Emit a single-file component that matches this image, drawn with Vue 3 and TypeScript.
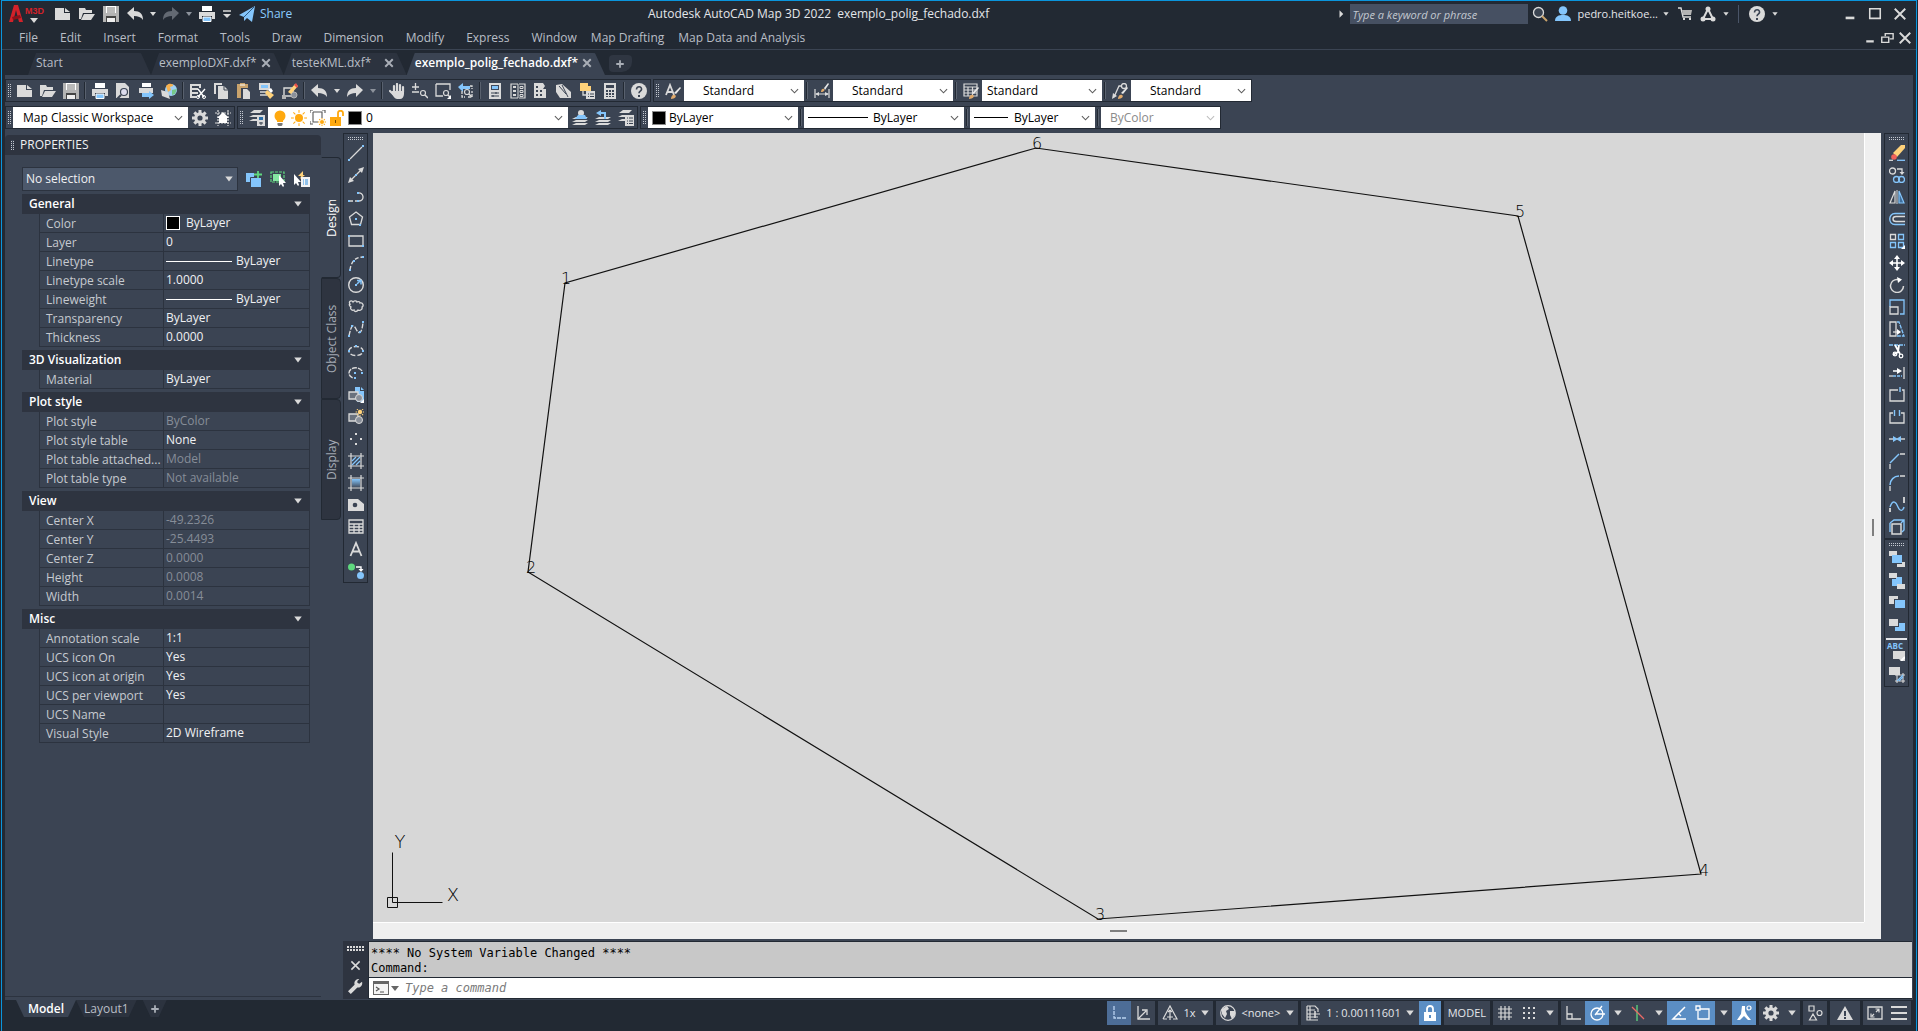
<script setup lang="ts">
import { h, ref } from 'vue'

const W = '#dadada'
const B = '#84c5fb'
const D = '#3b4453'
const Y = '#ffd27a'
const G = '#b4b4b4'

const ln = (d: string, c: string = W, w = 1.3, extra = '') =>
  `<path d="${d}" fill="none" stroke="${c}" stroke-width="${w}" ${extra}/>`
const fl = (d: string, c: string = W) => `<path d="${d}" fill="${c}"/>`
const dots = (pts: number[][], c: string = B) =>
  pts.map(([x, y]) => `<rect x="${x - 1}" y="${y - 1}" width="2" height="2" fill="${c}"/>`).join('')

const printer = fl('M3 0h10v5H3z', '#fff') + fl('M0 6h16v7h-3v-3H3v3H0z') + fl('M4 11h8v4H4z', B) + ln('M4 11h8v4.500H4z', '#fff', 1)
const undoArrow = 'M0 7l7-6v4c6 0 9 3 9 9-2-3-5-4-9-4v4z'
const redoArrow = 'M16 7L9 1v4c-6 0-9 3-9 9 2-3 5-4 9-4v4z'
const brush = fl('M9 10l6-6 1 1-5 6z', '#e8e8e8') + fl('M6 16c0-3 2-5 4-4s0 4-4 4z', '#e0a96a')
const block = `<path d="M1 5h9v7H1z" fill="#6a727e" stroke="${W}" stroke-width="1.300"/><circle cx="11" cy="11" r="3.500" fill="#8a909a" stroke="${W}"/>`
const magnifier = (x: number, y: number) =>
  `<circle cx="${x}" cy="${y}" r="2.500" fill="none" stroke="${W}" stroke-width="1.200"/>` + ln(`M${x + 2} ${y + 2}l3 3`, W, 1.5)
const layers = fl('M4 7h12l-3 2H0z') + fl('M4 10h12l-3 2H0z') + fl('M4 13h12l-3 2H0z')
const hatchFrame = ln('M3 0v16M13 0v16M0 3h16M0 13h16', W, 1.2)
const gear = (() => {
  let teeth = ''
  for (let i = 0; i < 8; i++) teeth += `<rect x="6.500" y="0" width="3" height="4" fill="${W}" transform="rotate(${i * 45} 8 8)"/>`
  return teeth + `<circle cx="8" cy="8" r="4.200" fill="none" stroke="${W}" stroke-width="3.200"/>`
})()
const sun = (cx: number, cy: number, r: number, c: string) => {
  let s = `<circle cx="${cx}" cy="${cy}" r="${r}" fill="${c}"/>`
  for (let i = 0; i < 8; i++)
    s += `<rect x="${cx - 0.5}" y="${cy - r * 2}" width="1" height="${r * 0.7}" fill="${c}" transform="rotate(${i * 45} ${cx} ${cy})"/>`
  return s
}

const icons: Record<string, string> = {
  new: fl('M0 2h9v5h6v7H0z') + fl('M10 2l5 4h-5z'),
  open: fl('M0 2h6l1 2h6v3H4L2 13H0z') + fl('M5 8h11l-4 6H2z'),
  save: fl('M0 0h16v16H0z', G) + fl('M3 0h10v7H3z', '#fff') + ln('M4 2h8M4 4h8M4 6h8', '#777', 1) + fl('M3 10h10v6H3z', '#444') + fl('M4 12h8v4H4z', '#eee'),
  print: printer,
  undo: fl(undoArrow), undoDim: fl(undoArrow, '#5a606b'),
  redo: fl(redoArrow), redoDim: fl(redoArrow, '#636973'),
  caret: fl('M5 6h6l-3 4z'), caretDim: fl('M5 6h6l-3 4z', '#8d939c'),
  qatMenu: ln('M4 5h8', W, 1.5) + fl('M4 8h8l-4 4z'),
  share: fl('M0 9L16 0 13 16 8 12 5 15V11z', B) + ln('M5 11L15 1', '#2d5a82', 1),
  preview: fl('M1 0h9l4 4v11H1z') + `<circle cx="9" cy="9" r="3.500" fill="#dde" stroke="${D}" stroke-width="1.200"/>` + ln('M6 12l-4 4', D, 2),
  publish: fl('M4 0h9v4H4z', '#fff') + fl('M1 5h14v5H1z') + fl('M4 10h7v-2l5 4-5 4v-2H4z', B),
  globe: `<circle cx="10" cy="7" r="6" fill="#9fd0f5"/>` + fl('M5 3c3-4 8-2 7 0l-3 1 1 3-3 2z', '#f6b04d') + fl('M11 7l5-1-2 5-3 1z', '#76c98a') + fl('M0 7l7 2 2 7-8-3z'),
  cut: fl('M0 1h11v4H9V3H2v2h6v2H2v2h6v2H2v2h4v2H0z') + ln('M8 6l6 8M15 6l-7 8', '#fff', 1.4) + `<circle cx="8" cy="14" r="1.500" fill="none" stroke="#fff"/><circle cx="14" cy="14" r="1.500" fill="none" stroke="#fff"/>`,
  copy: fl('M1 0h8v2H3v9H1z') + fl('M5 3h6l4 4v9H5z') + ln('M11 3v4h4', D, 1),
  paste: fl('M1 1h3V0h5v1h3v4H5v10H1z', '#c9a36c') + fl('M7 6h4l3 3v7H7z') + ln('M4 2h5', '#fff', 1),
  match: fl('M0 0h11v7H0z') + fl('M2 2h7v3H2z', B) + ln('M1 9h8M1 12h7', W, 1.5) + fl('M8 7l7 5-4 4-5-6z', Y) + fl('M9 7l3-2 2 3-2 2z', '#fff'),
  blockEdit: ln('M2 5h9v8H2z', W, 1.4) + fl('M0 12h4v4H0z', G) + `<circle cx="12" cy="12" r="3" fill="#8a909a" stroke="${G}"/>` + fl('M6 9L13 1l3 2-7 8z', Y) + fl('M12 2l2-2 2 3-1 2z', '#e8504a'),
  pan: ln('M5 9V3M8 8V1M11 8V2M14 9V4M4 11L1 8', W, 2.2, 'stroke-linecap="round"') + fl('M3 8h12v3c0 3-2 5-4 5H8c-2 0-4-3-5-5z'),
  zoomRt: ln('M0 4h7M3.500 0v7M0 9h7', W, 1.3) + magnifier(11, 10),
  zoomWin: ln('M1 1h14v6M1 1v12h7', W, 1.3) + magnifier(11, 10) + fl('M16 12v4h-4z', '#fff'),
  zoomPrev: fl('M0 4l5-4v3h7v3H5v3z', B) + ln('M4 8v6h3M10 14h4V8M12 3h2v3', W, 1.3, 'stroke-dasharray="3 1"') + magnifier(9, 9),
  props: fl('M2 0h12v16H2z') + fl('M4 2h8v5H4z', '#3e4a5e') + fl('M5 3h6v3H5z', B) + ln('M4 10h8M4 13h8', D, 1.2) + ln('M9 9v2M6 12v2', D, 1.2),
  design: ln('M8 1H1v14h7M9 1h6v14H9', W, 1.2) + ln('M8 1v14', W, 1) + fl('M3 3h3v2H3zM3 7h3v2H3zM3 11h3v2H3z') + ln('M10 3.500h3v2h-3zM10 7.500h3v2h-3zM10 11.500h3v2h-3z', W, 1),
  palettes: fl('M1 0h9l2 3-2 3h3v9H1z') + fl('M3 3h2v2H3zM3 7h2v2H3zM3 11h2v2H3zM7 7h2v2H7zM7 11h2v2H7z', D),
  sheets: fl('M0 2l6-1 9 8v6H4L0 9z') + ln('M6 2l6 12M3 3l7 8', D, 1),
  markup: fl('M1 0h8v8H1z', Y) + fl('M5 3h7v5H5z', Y) + ln('M4 8v4h3', W, 1.3) + fl('M7 8h9v8H7z') + ln('M9 11h1M11 11h4M9 13.500h1M11 13.500h4', D, 1),
  calc: fl('M2 0h12v16H2z') + fl('M4 2h8v3H4z', D) + fl('M4 7h2v2H4zM7 7h2v2H7zM10 7h2v2h-2zM4 10h2v2H4zM7 10h2v2H7zM10 10h2v2h-2zM4 13h2v1H4zM7 13h2v1H7zM10 13h2v1h-2z', D),
  help: `<circle cx="8" cy="8" r="8" fill="${W}"/>` + ln('M5.500 6.500c0-4 5.500-3.500 5 0-.3 1.600-2.500 1.700-2.500 3.700', D, 1.6) + fl('M7 12h2v2H7z', D),
  textStyle: ln('M1 12L5 2l4 10M2.500 9h5', W, 1.8) + brush,
  dimStyle: ln('M1 6v9M15 6v9M2 11h12', W, 1.2) + fl('M1 11l4-2v4zM15 11l-4-2v4z') + fl('M10 5l4-5 1 1-4 6z', '#e8e8e8') + fl('M7 9c0-3 2-4 3-3s0 3-3 3z', '#e0a96a'),
  tableStyle: ln('M1 1h13v12H1zM1 4h13M1 7h13M1 10h13M5 4v9M9.500 4v9', W, 1.2) + brush,
  leaderStyle: ln('M2 14L7 3h3', W, 1.3) + `<circle cx="12" cy="3" r="2.500" fill="none" stroke="${W}" stroke-width="1.300"/>` + fl('M0 16l1-6 4 3z') + brush,
  gear,
  workspace: ln('M3 0v16M13 0v16M0 3h16M0 13h16', W, 1.2, 'stroke-dasharray="2 1"') + fl('M8 2l6 6h-2v5H4V8H2z', '#fff'),
  layerProps: fl('M5 0h9l-3 3H1z') + fl('M4 5h4v2H0z') + fl('M4 9h4v2H0z') + fl('M8 5h8v11H8z') + fl('M10 7h4v3h-4z', '#2b6ea8') + ln('M10 13h4M12 12v3', D, 1),
  bulb: `<circle cx="8" cy="6" r="5.500" fill="#ffa90f"/>` + fl('M5 10h6v2H5z', '#ffa90f') + fl('M5.500 13h5v2l-1 1h-3l-1-1z', '#777'),
  sun: sun(8, 8, 4, '#ffa90f'),
  vpFreeze: ln('M3 2h9v6M3 2v10h5', '#555', 1.1) + ln('M0 3V0h3M12 0h3v3M0 11v3h3', '#555', 1.1) + sun(12, 12, 2, '#ffa90f'),
  unlock: ln('M9 7V3c0-3 5-3 5 0v3', '#ffa90f', 1.8) + fl('M1 7h11v9H1z', '#ffa90f') + fl('M6 10h1v3H6z', '#7a4d00'),
  layerCur: layers + `<circle cx="9" cy="3" r="3" fill="${W}"/>` + fl('M3 9l3-4h7l2 4z', B),
  layerPrev: layers + fl('M1 3l5-3v2h5v7H9V4H6v2z', B),
  layerStates: fl('M5 0h9l-3 3H1z') + fl('M4 5h4v2H0z') + fl('M4 9h4v2H0z') + fl('M7 5h9v11H7z') + ln('M9 8h1M11 8h4M9 11h1M11 11h4M9 13.500h1M11 13.500h4', D, 1),
  pickAdd: fl('M0 2h8v9H0z', B) + ln('M4.500 12V6.500H12', D, 1) + fl('M5 7h10v9H5z', B) + ln('M12 0v7M8 3.500h8', '#5fd87e', 1.8),
  selObjs: ln('M1 1h13v10H1z', '#5fd87e', 1.2, 'stroke-dasharray="3 1"') + fl('M3 3h8v7H3z', '#84e6a0') + fl('M9 4v11l2-2 2 3 1-1-1-3h3z', '#fff'),
  quickSel: fl('M0 3v11l2-2 2 3 1-1-1-3h3z', '#fff') + fl('M9 0L4 5h3L6 8l5-4H9z', Y) + fl('M7 6h9v10H7z', '#f4f4f4') + ln('M9 9h1M11 9h3M9 11h1M11 11h3M9 13h1M11 13h3', '#2f8fe0', 1),
  line: ln('M2 14L14 2') + dots([[1, 15], [15, 1]]),
  xline: ln('M2 14L14 2') + fl('M0 16l2-6 4 4zM16 0l-6 2 4 4z') + dots([[8, 8]]),
  pline: ln('M1 12h8', W, 1.4, 'stroke-dasharray="4 2"') + ln('M10 4c6-1 7 8 1 8') + dots([[1, 12], [10, 12], [10, 4]]),
  polygon: ln('M8 1l6.500 5-2 7.500h-9L1.500 6z') + dots([[8, 8], [12, 14]]),
  rect: ln('M1 3h14v10H1z') + dots([[1, 3], [15, 13]]),
  arc: ln('M2 15C3 7 7 2 15 2', W, 1.4, 'stroke-dasharray="4 2"') + dots([[2, 15], [6, 6], [15, 2]]),
  circle: `<circle cx="8" cy="8" r="7.300" fill="none" stroke="${W}" stroke-width="1.400"/>` + dots([[8, 8]]) + ln('M9 7l3-3M9 3.500h4v4', B, 1.5),
  revcloud: ln('M2 5c-2-3 2-4 3-2 1-2 4-1 4 0 2-1 3 0 3 1 3-1 4 3 2 4 1 3-3 4-4 3-1 2-4 2-4 0-3 1-4-2-3-3-2-1-2-3-1-3z', W, 1.3),
  spline: ln('M1 15C3 5 5 2 8 8s6 5 7-7', W, 1.4, 'stroke-dasharray="5 1.500"') + dots([[1, 15], [4, 5], [12, 11], [15, 1]]),
  ellipse: ln('M1 8c0-6 14-6 14 0s-14 6-14 0', W, 1.4, 'stroke-dasharray="5 2"') + dots([[1, 8], [15, 8], [8, 3]]),
  ellArc: ln('M14 6C11 1 1 2 1 8c0 3 2 4 4 5', W, 1.4, 'stroke-dasharray="5 1"') + dots([[7, 8], [14, 8], [7, 13]]),
  insertBlock: fl('M7 0h5v4h4v11H9V7H7z', B) + fl('M13 0l3 3h-3z', B) + block + fl('M16 12v4h-4z', '#fff'),
  makeBlock: block + sun(12, 3, 2.2, Y),
  point: dots([[8, 3], [3, 8], [13, 8], [8, 13]], W),
  hatch: hatchFrame + ln('M4 8l4-4M4 12l8-8M8 12l4-4', B, 1.3),
  gradient: hatchFrame + `<defs><linearGradient id="grad" x1="0" y1="0" x2="0" y2="1"><stop offset="0" stop-color="${B}"/><stop offset="1" stop-color="#445164"/></linearGradient></defs><rect x="4" y="4" width="8" height="8" fill="url(#grad)"/>`,
  region: fl('M0 2h10l6 5v7H0z') + `<circle cx="7" cy="8" r="2.300" fill="${D}"/>`,
  table: ln('M1 1h14v13H1zM1 5h14M1 8h14M1 11h14M6 5v9M11 5v9', W, 1.3),
  mtext: ln('M2.500 15L8 2l5.500 13M4.500 10.500h7', W, 1.8),
  addSel: `<circle cx="3.500" cy="4" r="3.500" fill="#5fd87e"/><circle cx="12.500" cy="12.500" r="3.500" fill="${B}"/>` + ln('M8 4h5v3', '#fff', 1.4) + fl('M10.500 6h5l-2.500 3z', '#fff'),
  erase: fl('M4 8l8-8h4v3l-8 9z', Y) + `<circle cx="5" cy="12" r="2.800" fill="#f0605a"/>` + ln('M0 15.300h4', W) + ln('M8 15.300h8', B),
  copyObj: `<circle cx="3.500" cy="4" r="3" fill="none" stroke="${W}" stroke-width="1.300"/>` + ln('M8 2h5v4') + fl('M10.500 5h5L13 8z') + `<circle cx="7.500" cy="12.500" r="3" fill="none" stroke="${B}" stroke-width="1.300"/><circle cx="12.500" cy="12.500" r="3" fill="none" stroke="${B}" stroke-width="1.300"/>`,
  mirror: ln('M6 2v12H1z', W, 1.2) + ln('M8 1v14', W, 1) + `<path d="M10 2v12h5z" fill="#3f6e9c" stroke="${B}" stroke-width="1.200"/>`,
  offset: ln('M16 2.500H6c-7 0-7 11 0 11h10', B, 1.4) + ln('M16 5.500H7c-4 0-4 5 0 5h9', W, 1.4),
  array: ln('M1.500 1.500h5v5h-5z') + ln('M9.500 1.500h5v5h-5zM1.500 9.500h5v5h-5zM9.500 9.500h5v5h-5z', B) + fl('M16 12v4h-4z', '#fff'),
  move: ln('M8 2v12M2 8h12', '#fff', 1.6) + fl('M8 0l3 4H5zM8 16l3-4H5zM0 8l4-3v6zM16 8l-4-3v6z', '#fff'),
  rotate: ln('M14.500 9A6.500 6.500 0 1 1 9 2.500', W, 1.5) + fl('M8 0l5 2.500L9 6z', '#fff'),
  scale: ln('M1 8V1h14v14h-4', B) + ln('M1 8h8v7H1z'),
  stretch: ln('M1 1h6v14H1z') + ln('M8 1h2l5 14H8', B, 1.3, 'stroke-dasharray="4 1"') + ln('M4 11h5') + fl('M8 8l4 3-4 3z', '#fff'),
  trim: ln('M0 2h16', B, 1.4, 'stroke-dasharray="4 1"') + ln('M6 2l5 9M10 2L9 9l-5 3', '#fff', 1.8) + `<circle cx="6" cy="11" r="1.800" fill="none" stroke="#fff" stroke-width="1.300"/><circle cx="12" cy="13" r="1.800" fill="none" stroke="#fff" stroke-width="1.300"/>`,
  extend: ln('M15 2v12') + ln('M4 6h5', '#fff', 1.5) + fl('M8 3l5 3-5 3z', '#fff') + ln('M0 11h4') + ln('M4 11h9', B, 1.4, 'stroke-dasharray="3 1"'),
  breakPt: ln('M9 3H1v11h14V3h-2') + ln('M11 0v5', B, 1.4),
  breakObj: ln('M4 4H1v10h14V4h-3') + ln('M5.500 1v6M10.500 1v6', B, 1.4),
  join: ln('M0 8h16', W, 1.4) + fl('M4 5l5 3-5 3zM12 5L7 8l5 3z', B),
  chamfer: ln('M1 16v-5M11 1h5') + ln('M1 10L10 1', B, 1.5),
  fillet: ln('M1 16v-5M11 1h5') + ln('M1 10c0-5 4-9 9-9', B, 1.5),
  blend: ln('M1 15v-4', W, 1.8) + ln('M1 10c3-8 6-5 8 0s5 4 6 0', B, 1.4) + ln('M15 6V0', W, 1.8),
  explode: ln('M3 5h9v10H3z', W, 1.5) + ln('M1 4l4-3h10v10l-2 2M12 4l3-3M1 4v9', B, 1.4),
  ordFront: fl('M0 0h8v5H0zM8 11h8v5H8z') + fl('M3 4h10v9H3z', D) + fl('M3 4h10v8H3z', B),
  ordBack: fl('M3 9V6h4V4h6v7H9v2H3z', B) + fl('M0 0h8v5H0zM8 11h8v5H8z'),
  ordAbove: fl('M0 1h9v3H5v5H0z') + fl('M6 5h10v8H6z', B),
  ordUnder: fl('M0 2h9v7H0z') + fl('M10 6h6v8H6v-4h4z', B),
  annFront: fl('M4 6h12v10H12l-2-2H4z') + ln('M12 16l4-4', '#fff', 2),
  hatchBack: fl('M0 0h11v8H0z') + ln('M8 6v10M14 6v10M6 8h10M6 14h10', W, 1.1) + ln('M8 14l6-6M10 14l4-4', B, 1.1),
  close: ln('M2 2l12 12M14 2L2 14', W, 2.2),
  closeDim: ln('M3 3l10 10M13 3L3 13', '#a9aeb6', 2.6),
  plus: ln('M8 3v10M3 8h10', '#a9aeb6', 2.4),
  min: fl('M3 11h10v3H3z'),
  max: ln('M2 2h12v11H2z', W, 1.8),
  restore: ln('M2 7h8v6H2z', W, 1.6) + ln('M6 6V3h9v6h-4', W, 1.6),
  wrench: fl('M15 3l-3 2-2-1V2l2-2c-3 0-6 2-5 6l-7 7 3 3 7-7c3 1 6-2 5-6z'),
  prompt: `<rect x="0.500" y="1.500" width="15" height="13" fill="#f4f4f4" stroke="#666"/>` + fl('M0 1h16v3H0z', '#666') + ln('M3 7l3 2-3 2M7 12h4', '#555', 1.2),
  search: `<circle cx="6.500" cy="6.500" r="5" fill="#3a4350" stroke="${W}" stroke-width="1.300"/>` + ln('M10 10l5 5', '#c9a36c', 2),
  user: `<circle cx="8" cy="4.500" r="4.300" fill="${B}"/>` + fl('M0 15c0-5 4-6 8-6s8 1 8 6z', B),
  cart: ln('M1 2h3l2 9h8', W, 1.4) + fl('M5 4h10l-1 5H6z', G) + fl('M6 12h2v2H6zM12 12h2v2h-2z'),
  apps: ln('M8 3L3 13M8 3l5 10M4 13h8', W, 2) + `<circle cx="8" cy="3" r="2.500" fill="${W}"/><circle cx="3" cy="13" r="2.500" fill="${W}"/><circle cx="13" cy="13" r="2.500" fill="${W}"/>`,
  expand: fl('M6 3l5 5-5 5z'),
  ucs1: ln('M3 1v12h13', '#b9d2f0', 1.3, 'stroke-dasharray="4 1"'),
  ucs2: ln('M3 1v13h12', W, 1.3) + ln('M3 14l8-8M7 5h5v5', W, 1.3),
  annScale: ln('M1 14L8 1l7 13h-4M1 14h4', W, 1.2) + ln('M8 5v10M6 7l2-2 2 2M5 12h6', W, 1.2),
  earth: `<circle cx="8" cy="8" r="7.300" fill="none" stroke="${W}" stroke-width="1.200"/>` + fl('M2 4l5-3 2 3-3 2 1 3-2 4-3-4zM10 6l5 0v4l-3 4-2-4z'),
  vpScale: ln('M2 1h8l3 3v3M2 1v14h11M5 1v14M2 5h8M2 9h13M2 12h11', W, 1.2) + ln('M10 6v7', W, 1.6),
  lock: ln('M5 7V4c0-4 6-4 6 0v3', '#fff', 1.8) + fl('M2 7h12v9H2z', '#fff') + fl('M7 10h2v3H7z', '#5b8ec4'),
  grid: ln('M4 1v14M8 1v14M12 1v14M1 4h14M1 8h14M1 12h14', W, 1.2),
  snap: dots([[3, 3], [8, 3], [13, 3], [3, 8], [8, 8], [13, 8], [3, 13], [8, 13], [13, 13]], W),
  ortho: ln('M2 1v13h14M2 9h5v5', W, 1.3),
  polar: `<circle cx="8" cy="9" r="6" fill="none" stroke="#fff" stroke-width="1.300"/>` + ln('M6 10L13 1M7 9h9', '#fff', 1.3),
  iso: ln('M7 0v16', '#5fd87e', 1.3) + ln('M2 2l12 12', '#ec6a66', 1.3),
  otrack: ln('M14 2L2 14h13', '#fff', 1.5) + ln('M7 8l3 3', '#fff', 1.3),
  osnap: ln('M5 4h9v10H3V6', '#fff', 1.3) + ln('M1 1h4v4H1z', '#fff', 1.3),
  annMon: fl('M6 1h3v5l2 4 4 5h-3l-4-4-4 4H1l4-6z', '#fff') + `<circle cx="13" cy="3" r="2" fill="none" stroke="#fff" stroke-width="1.200"/>`,
  isolate: ln('M2 1h5v5H2zM6 9l3.500 6h-7z', W, 1.2) + `<circle cx="12.500" cy="8" r="2.500" fill="none" stroke="${W}" stroke-width="1.200"/>`,
  warn: fl('M8 1l8 14H0z') + fl('M7 6h2v5H7zM7 12h2v2H7z', D),
  full: ln('M1 2h14v12H1z', W, 1.3) + ln('M5 11l2-2M9 7l3-3M4 8.500V12h3.500M8.500 4H12v3.500', W, 1.2),
  burger: ln('M0 2h16M0 8h16M0 14h16', W, 1.8),
}

const Ico = (p: { n: string; s?: number }) =>
  h('svg', { viewBox: '0 0 16 16', width: p.s ?? 16, height: p.s ?? 16, 'aria-hidden': 'true', innerHTML: icons[p.n] })
const Chevron = (p: { c?: string }) =>
  h('svg', { viewBox: '0 0 10 6', width: 9, height: 6, 'aria-hidden': 'true', innerHTML: ln('M1 1l4 4 4-4', p.c ?? '#5c5c5c', 1.2) })

const quick = ['new', 'open', 'save', 'undo', 'caret', 'redoDim', 'caretDim', 'print', 'qatMenu']
const menus = ['File', 'Edit', 'Insert', 'Format', 'Tools', 'Draw', 'Dimension', 'Modify', 'Express', 'Window', 'Map Drafting', 'Map Data and Analysis']
const docs = [
  { name: 'Start', closable: false },
  { name: 'exemploDXF.dxf*', closable: true },
  { name: 'testeKML.dxf*', closable: true },
  { name: 'exemplo_polig_fechado.dxf*', closable: true },
]
const activeDoc = ref(3)
const standard = [
  'new', 'open', 'save', '|', 'print', 'preview', 'publish', 'globe', '|', 'cut', 'copy', 'paste', 'match', 'blockEdit', '|',
  'undo', 'caret', 'redo', 'caretDim', '|', 'pan', 'zoomRt', 'zoomWin', 'zoomPrev', '|',
  'props', 'design', 'palettes', 'sheets', 'markup', 'calc', '|', 'help',
]
const styles = [
  { icon: 'textStyle', label: 'Text style', pad: 19 },
  { icon: 'dimStyle', label: 'Dimension style', pad: 19 },
  { icon: 'tableStyle', label: 'Table style', pad: 5 },
  { icon: 'leaderStyle', label: 'Multileader style', pad: 19 },
]
const entity = [
  { label: 'Color', value: 'ByLayer', width: 150, pad: 21, swatch: true, line: 0, off: false },
  { label: 'Linetype', value: 'ByLayer', width: 160, pad: 69, swatch: false, line: 60, off: false },
  { label: 'Lineweight', value: 'ByLayer', width: 125, pad: 44, swatch: false, line: 34, off: false },
  { label: 'Plot style', value: 'ByColor', width: 119, pad: 9, swatch: false, line: 0, off: true },
]

type Row = { k: string; v: string; muted?: boolean; kind?: 'swatch' | 'line' }
const sections: { title: string; rows: Row[] }[] = [
  {
    title: 'General',
    rows: [
      { k: 'Color', v: 'ByLayer', kind: 'swatch' },
      { k: 'Layer', v: '0' },
      { k: 'Linetype', v: 'ByLayer', kind: 'line' },
      { k: 'Linetype scale', v: '1.0000' },
      { k: 'Lineweight', v: 'ByLayer', kind: 'line' },
      { k: 'Transparency', v: 'ByLayer' },
      { k: 'Thickness', v: '0.0000' },
    ],
  },
  { title: '3D Visualization', rows: [{ k: 'Material', v: 'ByLayer' }] },
  {
    title: 'Plot style',
    rows: [
      { k: 'Plot style', v: 'ByColor', muted: true },
      { k: 'Plot style table', v: 'None' },
      { k: 'Plot table attached...', v: 'Model', muted: true },
      { k: 'Plot table type', v: 'Not available', muted: true },
    ],
  },
  {
    title: 'View',
    rows: [
      { k: 'Center X', v: '-49.2326', muted: true },
      { k: 'Center Y', v: '-25.4493', muted: true },
      { k: 'Center Z', v: '0.0000', muted: true },
      { k: 'Height', v: '0.0008', muted: true },
      { k: 'Width', v: '0.0014', muted: true },
    ],
  },
  {
    title: 'Misc',
    rows: [
      { k: 'Annotation scale', v: '1:1' },
      { k: 'UCS icon On', v: 'Yes' },
      { k: 'UCS icon at origin', v: 'Yes' },
      { k: 'UCS per viewport', v: 'Yes' },
      { k: 'UCS Name', v: '' },
      { k: 'Visual Style', v: '2D Wireframe' },
    ],
  },
]
const sideTabs = ['Design', 'Object Class', 'Display']

const drawTools = ['line', 'xline', 'pline', 'polygon', 'rect', 'arc', 'circle', 'revcloud', 'spline', 'ellipse', 'ellArc', 'insertBlock', 'makeBlock', 'point', 'hatch', 'gradient', 'region', 'table', 'mtext', 'addSel']
const modifyTools = ['erase', 'copyObj', 'mirror', 'offset', 'array', 'move', 'rotate', 'scale', 'stretch', 'trim', 'extend', 'breakPt', 'breakObj', 'join', 'chamfer', 'fillet', 'blend', 'explode']
const orderTools = ['ordFront', 'ordBack', 'ordAbove', 'ordUnder']

const vertices = [
  { n: 1, x: 192, y: 150, tx: 193, ty: 151 },
  { n: 2, x: 155, y: 439, tx: 158, ty: 440 },
  { n: 3, x: 725, y: 786, tx: 727, ty: 787 },
  { n: 4, x: 1328, y: 741, tx: 1331, ty: 743 },
  { n: 5, x: 1145, y: 83, tx: 1147, ty: 84 },
  { n: 6, x: 663, y: 15, tx: 664, ty: 16 },
]
const outline = vertices.map((v) => `${v.x},${v.y}`).join(' ')

type Item = { i?: string; t?: string; on?: boolean }
const status: Item[][] = [
  [{ i: 'ucs1', on: true }, { i: 'ucs2' }],
  [{ i: 'annScale' }, { t: '1x' }, { i: 'caret' }],
  [{ i: 'earth' }, { t: '<none>' }, { i: 'caret' }],
  [{ i: 'vpScale' }, { t: '1 : 0.00111601' }, { i: 'caret' }, { i: 'lock', on: true }],
  [{ t: 'MODEL' }],
  [{ i: 'grid' }, { i: 'snap' }, { i: 'caret' }],
  [{ i: 'ortho' }, { i: 'polar', on: true }, { i: 'caret' }, { i: 'iso' }, { i: 'caret' }, { i: 'otrack', on: true }, { i: 'osnap', on: true }, { i: 'caret' }, { i: 'annMon', on: true }],
  [{ i: 'gear' }, { i: 'caret' }],
  [{ i: 'isolate' }],
  [{ i: 'warn' }],
  [{ i: 'full' }, { i: 'burger' }],
]
</script>

<template>
  <div class="app">
    <header class="titlebar">
      <div class="quick">
        <button class="logo" aria-label="Application menu">
          <svg viewBox="0 0 14 18" width="14" height="18" aria-hidden="true">
            <path d="M0 17L5 0h4l5 17h-4L7 5 4 17z" fill="#d3222a" />
            <path d="M3 12l8-2 1 3-8 2z" fill="#8d1219" />
          </svg>
          <span class="logo-side"><b>M3D</b><svg viewBox="0 0 8 5" width="8" height="5" aria-hidden="true"><path d="M0 0h8L4 5z" fill="#dadada" /></svg></span>
        </button>
        <button v-for="(q, i) in quick" :key="i" class="slot" :class="{ narrow: q.startsWith('caret'), menu: q === 'qatMenu' }" :aria-label="q"><Ico :n="q" /></button>
        <a class="share" href="#"><Ico n="share" />Share</a>
      </div>
      <h1 class="title"><span>Autodesk AutoCAD Map 3D 2022</span><span>exemplo_polig_fechado.dxf</span></h1>
      <div class="info">
        <Ico n="expand" :s="12" />
        <input class="search" type="text" placeholder="Type a keyword or phrase" aria-label="Search" />
        <button class="slot" aria-label="Search"><Ico n="search" /></button>
        <button class="account"><Ico n="user" /><span>pedro.heitkoe...</span><Ico n="caret" :s="14" /></button>
        <button class="slot" aria-label="Store"><Ico n="cart" /></button>
        <button class="slot" aria-label="Apps"><Ico n="apps" /></button>
        <button class="slot narrow" aria-label="Apps menu"><Ico n="caret" :s="14" /></button>
        <i class="rule"></i>
        <button class="slot" aria-label="Help"><Ico n="help" /></button>
        <button class="slot narrow" aria-label="Help menu"><Ico n="caret" :s="14" /></button>
      </div>
      <div class="wincontrols">
        <button aria-label="Minimize"><Ico n="min" :s="14" /></button>
        <button aria-label="Maximize"><Ico n="max" :s="14" /></button>
        <button aria-label="Close"><Ico n="close" :s="14" /></button>
      </div>
    </header>

    <nav class="menubar">
      <a v-for="m in menus" :key="m" href="#">{{ m }}</a>
      <span class="doccontrols">
        <button aria-label="Minimize drawing"><Ico n="min" :s="12" /></button>
        <button aria-label="Restore drawing"><Ico n="restore" :s="14" /></button>
        <button aria-label="Close drawing"><Ico n="close" :s="14" /></button>
      </span>
    </nav>

    <div class="doctabs">
      <div v-for="(d, i) in docs" :key="d.name" class="doctab" :class="{ active: i === activeDoc }">
        <button class="docname" @click="activeDoc = i">{{ d.name }}</button>
        <button v-if="d.closable" class="docclose" aria-label="Close"><Ico n="closeDim" :s="12" /></button>
      </div>
      <button class="addtab" aria-label="New tab"><Ico n="plus" :s="12" /></button>
    </div>

    <main class="work">
      <div class="toolrows">
        <div class="toolrow">
          <div class="bar">
            <i class="grip"></i>
            <template v-for="(t, i) in standard" :key="i">
              <i v-if="t === '|'" class="sep"></i>
              <button v-else class="slot" :class="{ narrow: t.startsWith('caret') }" :aria-label="t"><Ico :n="t" /></button>
            </template>
          </div>
          <div class="bar">
            <i class="grip"></i>
            <template v-for="(s, i) in styles" :key="s.icon">
              <i v-if="i" class="sep"></i>
              <button class="slot" :aria-label="s.label"><Ico :n="s.icon" /></button>
              <span class="combo" style="width: 120px">
                <select :aria-label="s.label" :style="{ paddingLeft: s.pad + 'px' }"><option>Standard</option></select>
                <Chevron />
              </span>
            </template>
          </div>
        </div>
        <div class="toolrow">
          <div class="bar">
            <i class="grip"></i>
            <span class="combo" style="width: 175px">
              <select aria-label="Workspace" class="inset"><option>Map Classic Workspace</option></select>
              <Chevron />
            </span>
            <button class="slot" aria-label="Workspace settings"><Ico n="gear" /></button>
            <button class="slot" aria-label="My workspace"><Ico n="workspace" /></button>
          </div>
          <div class="bar">
            <i class="grip"></i>
            <button class="slot" aria-label="Layer properties"><Ico n="layerProps" /></button>
            <span class="combo" style="width: 300px">
              <select aria-label="Layer" class="layer"><option>0</option></select>
              <span class="adorn layericons">
                <Ico n="bulb" /><Ico n="sun" /><Ico n="vpFreeze" /><Ico n="unlock" /><i class="swatch"></i>
              </span>
              <Chevron />
            </span>
            <button class="slot" aria-label="Make current"><Ico n="layerCur" /></button>
            <button class="slot" aria-label="Layer previous"><Ico n="layerPrev" /></button>
            <button class="slot" aria-label="Layer states"><Ico n="layerStates" /></button>
          </div>
          <div class="bar">
            <i class="grip"></i>
            <template v-for="(e, i) in entity" :key="e.label">
              <i v-if="i" class="sep"></i>
              <span class="combo" :style="{ width: e.width + 'px' }">
                <select :aria-label="e.label" :disabled="e.off" :style="{ paddingLeft: e.pad + 'px' }"><option>{{ e.value }}</option></select>
                <span v-if="e.swatch" class="adorn"><i class="swatch"></i></span>
                <span v-if="e.line" class="adorn"><i class="stroke" :style="{ width: e.line + 'px' }"></i></span>
                <Chevron :c="e.off ? '#bdbdbd' : '#5c5c5c'" />
              </span>
            </template>
          </div>
        </div>
      </div>

      <div class="panes">
        <aside class="palette">
          <div class="palbody">
            <h2 class="palhead"><i class="grip small"></i>PROPERTIES</h2>
            <div class="palcontent">
              <div class="picker">
                <span class="combo dark">
                  <select aria-label="Selection"><option>No selection</option></select>
                  <Ico n="caret" :s="20" />
                </span>
                <button class="slot" aria-label="Toggle PICKADD"><Ico n="pickAdd" /></button>
                <button class="slot" aria-label="Select objects"><Ico n="selObjs" /></button>
                <button class="slot" aria-label="Quick select"><Ico n="quickSel" /></button>
              </div>
              <section v-for="s in sections" :key="s.title" class="group">
                <h3>{{ s.title }}<Ico n="caret" :s="20" /></h3>
                <table>
                  <tbody>
                    <tr v-for="r in s.rows" :key="r.k">
                      <th scope="row">{{ r.k }}</th>
                      <td :class="{ muted: r.muted }">
                        <span class="val"><i v-if="r.kind" :class="r.kind"></i>{{ r.v }}</span>
                      </td>
                    </tr>
                  </tbody>
                </table>
              </section>
            </div>
          </div>
          <div class="sidetabs">
            <button v-for="(t, i) in sideTabs" :key="t" :class="{ active: i === 0 }">{{ t }}</button>
          </div>
        </aside>

        <div class="stage">
          <div class="stagerow">
            <div class="vbar">
              <i class="grip flat"></i>
              <button v-for="t in drawTools" :key="t" :aria-label="t"><Ico :n="t" /></button>
            </div>
            <div class="view">
              <svg class="drawing" viewBox="0 0 1491 789" preserveAspectRatio="xMinYMin meet" role="img" aria-label="Drawing">
                <polygon :points="outline" fill="none" stroke="#111" stroke-width="1.200" />
                <text v-for="v in vertices" :key="v.n" :x="v.tx" :y="v.ty" text-anchor="middle">{{ v.n }}</text>
                <path d="M19.500 719.500v50h50M14.500 764.500h10v10h-10z" fill="none" stroke="#111" stroke-width="1" />
                <text x="27" y="715" class="axis" text-anchor="middle">Y</text>
                <text x="80" y="768" class="axis" text-anchor="middle">X</text>
              </svg>
              <div class="vscroll"><i></i></div>
              <div class="hscroll"><i></i></div>
            </div>
            <div class="vbars">
              <div class="vbar">
                <i class="grip flat"></i>
                <button v-for="t in modifyTools" :key="t" :aria-label="t"><Ico :n="t" /></button>
              </div>
              <div class="vbar">
                <i class="grip flat"></i>
                <button v-for="t in orderTools" :key="t" :aria-label="t"><Ico :n="t" /></button>
                <i class="hsep"></i>
                <button class="abc" aria-label="Bring annotations to front"><Ico n="annFront" /><b>ABC</b></button>
                <button aria-label="Send hatches to back"><Ico n="hatchBack" /></button>
              </div>
            </div>
          </div>

          <div class="command">
            <div class="cmdside">
              <i class="grip wide"></i>
              <button aria-label="Close"><Ico n="close" :s="11" /></button>
              <button aria-label="Customize"><Ico n="wrench" :s="15" /></button>
            </div>
            <div class="cmdmain">
              <pre class="history">**** No System Variable Changed ****
Command:</pre>
              <label class="cmdline">
                <Ico n="prompt" /><svg viewBox="0 0 8 5" width="8" height="5" aria-hidden="true"><path d="M0 0h8L4 5z" fill="#666" /></svg>
                <input type="text" placeholder="Type a command" aria-label="Command" />
              </label>
            </div>
          </div>
        </div>
      </div>
    </main>

    <footer class="status">
      <div class="layouts">
        <button class="layout active">Model</button>
        <button class="layout">Layout1</button>
        <button class="layout add" aria-label="New layout"><Ico n="plus" :s="12" /></button>
      </div>
      <div class="modes">
        <div v-for="(g, gi) in status" :key="gi" class="mode">
          <button v-for="(b, bi) in g" :key="bi" :class="{ on: b.on, text: b.t, arrow: b.i === 'caret', slim: b.i === 'lock', wide: b.i === 'warn' }" :aria-label="b.t ?? b.i">
            <Ico v-if="b.i" :n="b.i" :s="b.i === 'caret' ? 20 : 16" /><template v-else>{{ b.t }}</template>
          </button>
        </div>
      </div>
    </footer>
  </div>
</template>

<style>
body {
  margin: 0;
  background: #1f262f;
}
</style>

<style scoped>
.app {
  box-sizing: border-box;
  min-height: 100vh;
  margin: 0 1px;
  border: 1px solid #0a95dd;
  border-bottom: 0;
  display: flex;
  flex-direction: column;
  background: #222933;
  color: #e4e6ea;
  font: 12px/16px "Open Sans", "Noto Sans", sans-serif;
}
button {
  padding: 0;
  border: 0;
  background: none;
  color: inherit;
  font: inherit;
  display: flex;
  align-items: center;
  justify-content: center;
}
a {
  color: inherit;
  text-decoration: none;
}
svg {
  display: block;
  flex: none;
}
i {
  display: block;
  flex: none;
}
.slot {
  width: 23px;
  height: 21px;
  flex: none;
}
.slot.narrow {
  width: 13px;
}

.titlebar {
  display: flex;
  align-items: center;
  height: 26px;
}
.quick {
  display: flex;
  align-items: center;
  width: 646px;
}
.quick .slot {
  width: 24px;
}
.quick .slot.narrow {
  width: 12px;
}
.quick .slot.menu {
  width: 16px;
}
.logo {
  width: 49px;
  gap: 2px;
}
.logo-side {
  display: flex;
  flex-direction: column;
  align-items: center;
  gap: 1px;
}
.logo-side b {
  color: #d3222a;
  font: 700 9px/12px "Liberation Sans", sans-serif;
}
.share {
  display: flex;
  align-items: center;
  gap: 5px;
  margin-left: 4px;
  color: #8acbff;
}
.title {
  display: flex;
  gap: 6px;
  margin: 0;
  font-size: 12px;
  font-weight: 400;
}
.info {
  display: flex;
  align-items: center;
  margin-left: auto;
}
.search {
  box-sizing: border-box;
  width: 178px;
  height: 20px;
  margin-left: 3px;
  padding: 0 2px;
  border: 0;
  background: #465062;
  color: #fff;
  font: italic 11px "Open Sans", sans-serif;
}
.search::placeholder {
  color: #c3c8d0;
  opacity: 1;
}
.account {
  margin-left: 4px;
  font-size: 11px;
}
.account span {
  margin: 0 1px 0 6px;
}
.rule {
  width: 1px;
  height: 18px;
  margin: 0 6px;
  background: #4a5568;
}
.wincontrols {
  display: flex;
  gap: 11px;
  margin: 0 9px 0 62px;
}

.menubar {
  display: flex;
  align-items: center;
  gap: 22px;
  height: 22px;
  padding-left: 17px;
  border-bottom: 1px solid #3b4453;
  color: #b9bec6;
}
.menubar a:nth-of-type(n + 11) {
  margin-left: -8px;
}
.doccontrols {
  display: flex;
  align-items: center;
  gap: 4px;
  margin: 0 4px 0 auto;
}

.doctabs {
  display: flex;
  align-items: flex-end;
  height: 25px;
  padding-left: 26px;
}
.doctab {
  box-sizing: border-box;
  display: flex;
  align-items: center;
  justify-content: space-between;
  gap: 3px;
  min-width: 123px;
  height: 22px;
  padding: 0 12px 2px 8px;
  border-radius: 8px 12px 0 0;
  background: #2c333f;
  color: #b9bec6;
  clip-path: polygon(0 100%, 8px 0, calc(100% - 10px) 0, 100% 100%);
}
.doctab.active {
  background: #3b4453;
  color: #fff;
  font-weight: 600;
}
.addtab {
  width: 23px;
  height: 17px;
  margin: 0 0 3px 4px;
  border-radius: 4px 4px 10px 4px;
  background: #2f3642;
}

.work {
  flex: 1;
  display: flex;
  flex-direction: column;
  margin: 0 3px;
  background: #3b4453;
}
.toolrows {
  display: flex;
  flex-direction: column;
  gap: 4px;
  padding: 4px 0;
}
.toolrow {
  display: flex;
  gap: 2px;
}
.bar {
  display: flex;
  align-items: center;
  height: 21px;
  border: 1px solid #222933;
}
.grip {
  width: 3px;
  height: 15px;
  margin: 0 2px;
  background-image: linear-gradient(#3b4453 1px, transparent 1px), linear-gradient(90deg, #c3c8d0 1px, transparent 1px);
  background-size: 2px 2px;
}
.grip.small {
  height: 10px;
}
.grip.flat {
  width: 15px;
  height: 4px;
  margin: 2px auto;
}
.grip.wide {
  width: 17px;
  height: 6px;
  background-image: linear-gradient(#2e3440 1px, transparent 1px), linear-gradient(90deg, #dadada 2px, transparent 2px);
  background-size: 3px 3px;
}
.sep {
  width: 2px;
  height: 17px;
  margin: 0 2px;
  background: #222933;
  border-right: 1px solid #59616e;
  box-sizing: border-box;
}
.combo {
  display: grid;
  align-items: center;
  height: 21px;
  background: #fff;
}
.combo > * {
  grid-area: 1 / 1;
}
.combo > svg {
  justify-self: end;
  margin-right: 5px;
  pointer-events: none;
}
.combo select {
  appearance: none;
  width: 100%;
  height: 21px;
  padding: 0 16px 0 4px;
  border: 0;
  background: none;
  color: #000;
  font: 12px/16px "Open Sans", sans-serif;
  opacity: 1;
}
.combo select.inset {
  padding-left: 10px;
}
.combo select.layer {
  padding-left: 98px;
}
.combo select:disabled {
  color: #8a8a8a;
}
.adorn {
  display: flex;
  align-items: center;
  padding-left: 4px;
  pointer-events: none;
}
.layericons {
  gap: 3px;
}
.swatch {
  box-sizing: border-box;
  width: 14px;
  height: 14px;
  border: 1px solid #8a8a8a;
  background: #000;
}
.stroke {
  height: 1px;
  background: #000;
}

.panes {
  flex: 1;
  display: flex;
}
.palette {
  display: flex;
  width: 336px;
  flex: none;
  margin: 2px 0 3px;
}
.palbody {
  width: 316px;
  box-sizing: border-box;
  border-bottom: 1px solid #2c333f;
}
.palhead {
  display: flex;
  align-items: center;
  gap: 4px;
  height: 20px;
  margin: 0;
  padding-left: 4px;
  border-radius: 4px 4px 0 0;
  background: #2e3440;
  color: #f0f1f3;
  font-size: 12px;
  font-weight: 400;
}
.palcontent {
  padding: 12px 11px 0 17px;
}
.picker {
  display: flex;
  align-items: center;
  margin-bottom: 3px;
}
.picker .slot {
  width: 24px;
}
.combo.dark {
  box-sizing: border-box;
  flex: none;
  width: 216px;
  height: 24px;
  margin-right: 4px;
  border: 1px solid #2c333f;
  background: #4c586b;
}
.combo.dark select {
  color: #f0f1f3;
  padding-left: 3px;
}
.combo.dark > svg {
  margin-right: -2px;
}
.group {
  margin-bottom: 3px;
}
.group h3 {
  display: flex;
  align-items: center;
  justify-content: space-between;
  height: 20px;
  margin: 0;
  padding: 0 2px 0 7px;
  background: #2e3440;
  color: #fff;
  font-size: 12px;
  font-weight: 600;
}
.group table {
  width: 271px;
  margin-left: 17px;
  border-left: 1px solid #2c333f;
  border-spacing: 0;
  table-layout: fixed;
}
.group th,
.group td {
  box-sizing: border-box;
  height: 19px;
  padding: 0 0 0 6px;
  border-right: 1px solid #2c333f;
  border-bottom: 1px solid #2c333f;
  font-weight: 400;
  text-align: left;
  line-height: 16px;
  white-space: nowrap;
}
.group th {
  width: 124px;
  padding-top: 2px;
  color: #c6cad0;
}
.group td {
  padding-left: 2px;
  color: #f0f1f3;
}
.group td.muted {
  color: #868d98;
}
.val {
  display: flex;
  align-items: center;
}
.val .swatch {
  margin-right: 6px;
  border-color: #fff;
}
.val .line {
  width: 66px;
  height: 1px;
  margin-right: 4px;
  background: #fff;
}
.sidetabs {
  display: flex;
  flex-direction: column;
  padding-top: 22px;
}
.sidetabs button {
  box-sizing: border-box;
  width: 20px;
  height: 121px;
  padding-right: 2px;
  border: 1px solid #222933;
  border-radius: 4px 0 0 4px;
  background: #2e3440;
  color: #a5abb5;
  writing-mode: vertical-rl;
  transform: rotate(180deg);
}
.sidetabs button.active {
  border-right-color: #3b4453;
  background: #3b4453;
  color: #fff;
}

.stage {
  flex: 1;
  min-width: 0;
  display: flex;
  flex-direction: column;
  padding-left: 2px;
}
.stagerow {
  flex: 1;
  display: flex;
  align-items: flex-start;
  gap: 4px;
}
.vbar {
  box-sizing: border-box;
  width: 25px;
  border: 1px solid #222933;
  display: flex;
  flex-direction: column;
}
.vbar button {
  height: 22px;
}
.vbars {
  margin: 0 4px 0 -1px;
}
.hsep {
  height: 2px;
  margin: 2px 1px;
  background: #e4e6ea;
}
.abc {
  position: relative;
}
.abc b {
  position: absolute;
  left: 2px;
  top: 0;
  color: #84c5fb;
  font-size: 8px;
  line-height: 8px;
}
.view {
  flex: 1;
  align-self: stretch;
  display: grid;
  grid-template-columns: 1fr 17px;
  grid-template-rows: 1fr 17px;
  margin-left: 1px;
  background: #efefef;
}
.drawing {
  width: 100%;
  height: 100%;
  overflow: visible;
  background: #d7d7d7;
}
.drawing text {
  fill: #000;
  font-family: "DejaVu Sans", sans-serif;
  font-size: 16px;
  font-weight: 200;
}
.drawing text.axis {
  font-size: 18px;
}
.vscroll {
  display: flex;
  justify-content: center;
  border-left: 1px solid #fff;
}
.vscroll i {
  width: 2px;
  height: 17px;
  margin-top: 386px;
  background: #7f7f7f;
}
.hscroll {
  display: flex;
  align-items: center;
  justify-content: center;
  border-top: 1px solid #fff;
}
.hscroll i {
  width: 17px;
  height: 2px;
  background: #7f7f7f;
}

.command {
  display: flex;
  margin: 2px 1px 1px 0;
  height: 58px;
}
.cmdside {
  display: flex;
  flex-direction: column;
  align-items: center;
  justify-content: space-between;
  width: 25px;
  box-sizing: border-box;
  padding: 4px 0 5px;
  background: #2e3440;
}
.cmdmain {
  flex: 1;
  border: 1px solid #222933;
  border-right: 0;
  color: #000;
  font-family: "DejaVu Sans Mono", monospace;
}
.history {
  height: 31px;
  margin: 0;
  padding: 4px 2px 0;
  background: #c8c8c8;
  border-bottom: 1px solid #222933;
  font: 12px/15px "DejaVu Sans Mono", monospace;
}
.cmdline {
  display: flex;
  align-items: center;
  gap: 2px;
  height: 20px;
  padding-left: 4px;
  background: #fff;
}
.cmdline input {
  flex: 1;
  height: 20px;
  padding: 0 4px;
  border: 0;
  outline: 0;
  background: none;
  font: italic 12px "DejaVu Sans Mono", monospace;
}
.cmdline input::placeholder {
  color: #7a7a7a;
  opacity: 1;
}

.status {
  display: flex;
  justify-content: space-between;
  height: 32px;
  padding: 0 5px 0 14px;
}
.layouts {
  display: flex;
}
.layout {
  height: 17px;
  min-width: 60px;
  padding: 0 8px;
  border-radius: 0 0 8px 8px;
  background: #2c333f;
  color: #b9bec6;
  clip-path: polygon(0 0, 100% 0, calc(100% - 8px) 100%, 8px 100%);
}
.layout.active {
  background: #3b4453;
  color: #fff;
  font-weight: 600;
}
.layout.add {
  min-width: 24px;
  margin-left: 6px;
  padding: 0;
}
.modes {
  display: flex;
  gap: 3px;
  padding-top: 1px;
}
.mode {
  display: flex;
  height: 24px;
  background: #3b4453;
  font-size: 11px;
}
.mode button {
  width: 24px;
  height: 24px;
}
.mode button.arrow {
  width: 17px;
}
.mode button.slim {
  width: 22px;
}
.mode button.wide {
  width: 30px;
}
.mode button.text {
  width: auto;
  padding: 0 1px;
}
.mode button.text:only-child {
  padding: 0 4px;
}
.mode button.on {
  background: #5b8ec4;
}
.mode:first-child button.on {
  background: #4d6d97;
}
</style>
